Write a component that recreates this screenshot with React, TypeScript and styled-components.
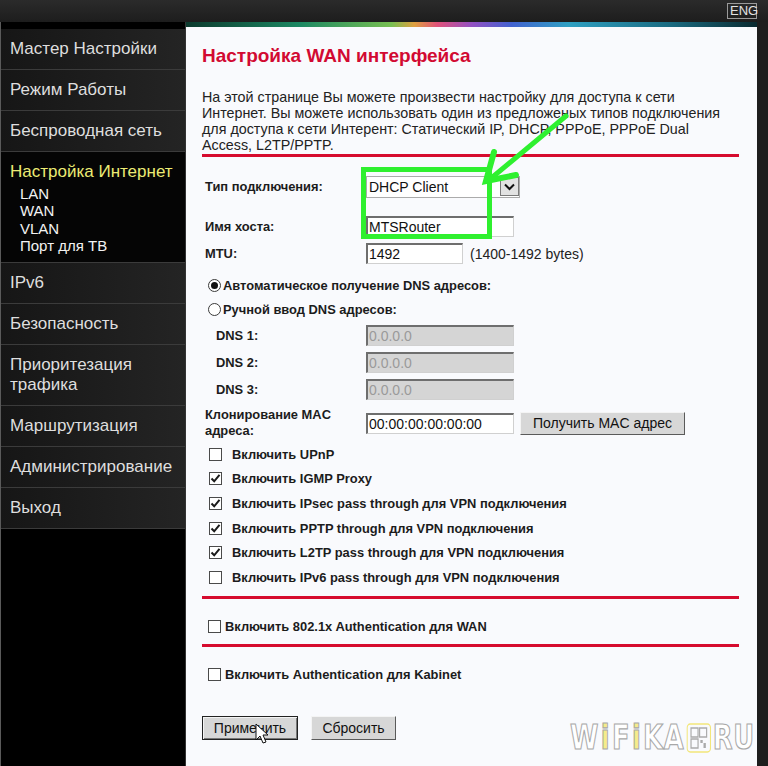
import React from 'react';
import styled, { createGlobalStyle, css } from 'styled-components';

const GlobalStyle = createGlobalStyle`
  html, body {
    margin: 0;
    padding: 0;
    background: #1c1c1c;
  }
  * {
    box-sizing: border-box;
  }
`;

const FONT = `"Liberation Sans", Arial, sans-serif`;

const Page = styled.div`
  position: relative;
  width: 768px;
  height: 766px;
  overflow: hidden;
  background: #1c1c1c;
  font-family: ${FONT};
  display: flex;
  flex-direction: column;
`;

const TopBar = styled.div`
  height: 22px;
  flex-shrink: 0;
  background: linear-gradient(#2b2b2b, #1d1d1d);
  display: flex;
  justify-content: flex-end;
  align-items: center;
  padding-right: 11px;
`;

const Lang = styled.span`
  border: 1px solid #9a9a9a;
  color: #e2e2e2;
  font-size: 13px;
  line-height: 14px;
  padding: 0 2px;
  width: 30px;
  text-align: center;
`;

const Main = styled.div`
  flex: 1;
  display: flex;
  min-height: 0;
`;

const Sidebar = styled.nav`
  width: 186px;
  flex-shrink: 0;
  background: #000;
  border-left: 1px solid #5a5a5a;
  border-right: 1px solid #333;
  padding-top: 7px;
  display: flex;
  flex-direction: column;
`;

const NavItem = styled.div`
  padding: 10px 9px;
  font-size: 17px;
  line-height: 20px;
  color: #dedede;
  background: linear-gradient(to right, #161616, #242424);
  border-bottom: 1px solid #3b3b3b;
`;

const ActiveGroup = styled.div`
  padding: 10px 9px 8px;
  background: #050505;
  border-bottom: 1px solid #3b3b3b;
`;

const ActiveTitle = styled.div`
  font-size: 17px;
  line-height: 20px;
  color: #ecec74;
`;

const SubList = styled.div`
  margin-top: 3px;
  padding-left: 10px;
`;

const SubItem = styled.div`
  font-size: 15px;
  line-height: 17.3px;
  color: #f2f2f2;
`;

const Panel = styled.section`
  position: relative;
  width: 571px;
  flex-shrink: 0;
  background: #f9fafd;
  display: flex;
  flex-direction: column;
`;

const Strip = styled.div`
  height: 5px;
  background: linear-gradient(
    to right,
    #0c3a2e 0%,
    #1c8863 20%,
    #78bf52 36%,
    #e0a040 40%,
    #e0527a 44%,
    #9350c2 50%,
    #4262d0 57%,
    #2fa0c2 67%,
    #1a6a80 85%,
    #0a2a30 100%
  );
`;

const PanelBody = styled.div`
  padding: 0 18px 0 16px;
  display: flex;
  flex-direction: column;
`;

const Title = styled.h1`
  margin: 18px 0 0;
  font-size: 19px;
  line-height: 22px;
  font-weight: bold;
  color: #d20a32;
`;

const Intro = styled.p`
  margin: 22px 0 0;
  font-size: 14.3px;
  line-height: 16px;
  color: #222;
`;

const Divider = styled.div<{ $top: number }>`
  height: 3px;
  margin-top: ${p => p.$top}px;
  background: #d60b2e;
`;

const Row = styled.div<{ $h: number; $top?: number }>`
  display: grid;
  grid-template-columns: 164px 1fr;
  align-items: center;
  height: ${p => p.$h}px;
  margin-top: ${p => p.$top ?? 0}px;
`;

const Label = styled.div<{ $indent?: number }>`
  padding-left: ${p => p.$indent ?? 3}px;
  font-size: 12.9px;
  line-height: 16px;
  font-weight: bold;
  color: #1c1c1c;
`;

const Field = styled.div`
  display: flex;
  align-items: center;
  font-size: 14px;
  color: #222;
`;

const SelectBox = styled.div`
  display: flex;
  align-items: center;
  width: 154px;
  height: 22px;
  border: 1px solid #ababab;
  background: #fff;
  padding-left: 2px;
  font-size: 14px;
  color: #111;
`;

const SelectArrow = styled.span`
  margin-left: auto;
  width: 19px;
  height: 19px;
  border: 1px solid #7a7a7a;
  background: #e2e2e2;
  display: flex;
  align-items: center;
  justify-content: center;
`;

const TextInput = styled.div<{ $w: number; $disabled?: boolean }>`
  width: ${p => p.$w}px;
  height: 21px;
  border-top: 2px solid #6e6e6e;
  border-left: 2px solid #6e6e6e;
  border-right: 1px solid #d0d0d0;
  border-bottom: 1px solid #d0d0d0;
  padding-left: 1px;
  font-size: 14px;
  line-height: 18px;
  color: #111;
  background: #fff;
  ${p =>
    p.$disabled &&
    css`
      background: #d5d5d5;
      color: #9a9a9a;
    `}
`;

const Hint = styled.span`
  margin-left: 7px;
  font-size: 14px;
  color: #222;
`;

const Button = styled.button<{ $w: number; $h?: number; $focused?: boolean }>`
  width: ${p => p.$w}px;
  height: ${p => p.$h ?? 24}px;
  padding: 0;
  font-family: ${FONT};
  font-size: 14px;
  color: #111;
  background: #d7d7d7;
  border: 1px solid;
  border-color: #f4f4f4 #5a5a5a #5a5a5a #f4f4f4;
  ${p =>
    p.$focused &&
    css`
      border: 1px solid #222;
      box-shadow: inset 1px 1px 0 #f4f4f4, inset -1px -1px 0 #777;
    `}
`;

const MacButton = styled(Button)`
  margin-left: 6px;
`;

const OptionRow = styled.div<{ $h: number; $top?: number; $pad: number; $gap: number }>`
  display: flex;
  align-items: center;
  height: ${p => p.$h}px;
  margin-top: ${p => p.$top ?? 0}px;
  padding-left: ${p => p.$pad}px;
  gap: ${p => p.$gap}px;
  font-size: 12.9px;
  font-weight: bold;
  color: #1c1c1c;
`;

const Box = styled.span`
  width: 13px;
  height: 13px;
  flex-shrink: 0;
  border: 1px solid #4a4a4a;
  background: #fff;
  display: flex;
  align-items: center;
  justify-content: center;
`;

const Radio = styled.span<{ $on?: boolean }>`
  width: 13px;
  height: 13px;
  flex-shrink: 0;
  border: 1px solid #3a3a3a;
  border-radius: 50%;
  background: #fff;
  display: flex;
  align-items: center;
  justify-content: center;
  &::after {
    content: '';
    width: 7px;
    height: 7px;
    border-radius: 50%;
    background: ${p => (p.$on ? '#111' : 'transparent')};
  }
`;

const Actions = styled.div`
  display: flex;
  gap: 13px;
  margin-top: 29px;
`;

const RightEdge = styled.div`
  flex: 1;
  background: #1e1e1e;
`;

const Watermark = styled.div`
  position: absolute;
  right: 2px;
  bottom: 13px;
  display: flex;
  align-items: center;
  gap: 2px;
  font-family: "DejaVu Sans", sans-serif;
  font-weight: bold;
  font-size: 33px;
  line-height: 28px;
  letter-spacing: 1px;
  color: #fff;
  -webkit-text-stroke: 1.2px #a8a8a8;
  transform: scaleX(0.78);
  transform-origin: right center;
`;

const Accent = styled.span`
  color: #f6ec8a;
`;

const Overlay = styled.svg`
  position: absolute;
  left: 0;
  top: 0;
  pointer-events: none;
`;

const Check = ({ on }: { on?: boolean }) => (
  <Box>
    {on && (
      <svg width="11" height="11" viewBox="0 0 11 11">
        <path d="M1.5 5.5 L4.2 8.3 L9.5 1.8" fill="none" stroke="#1a1a1a" strokeWidth="2" />
      </svg>
    )}
  </Box>
);

const options: [string, boolean][] = [
  ['Включить UPnP', false],
  ['Включить IGMP Proxy', true],
  ['Включить IPsec pass through для VPN подключения', true],
  ['Включить PPTP through для VPN подключения', true],
  ['Включить L2TP pass through для VPN подключения', true],
  ['Включить IPv6 pass through для VPN подключения', false],
];

const topNav = ['Мастер Настройки', 'Режим Работы', 'Беспроводная сеть'];
const bottomNav = ['IPv6', 'Безопасность', 'Приоритезация трафика', 'Маршрутизация', 'Администрирование', 'Выход'];

const App = () => {
  return (
    <Page>
      <GlobalStyle />
      <TopBar>
        <Lang>ENG</Lang>
      </TopBar>
      <Main>
        <Sidebar>
          {topNav.map(n => (
            <NavItem key={n}>{n}</NavItem>
          ))}
          <ActiveGroup>
            <ActiveTitle>Настройка Интернет</ActiveTitle>
            <SubList>
              <SubItem>LAN</SubItem>
              <SubItem>WAN</SubItem>
              <SubItem>VLAN</SubItem>
              <SubItem>Порт для ТВ</SubItem>
            </SubList>
          </ActiveGroup>
          {bottomNav.map(n => (
            <NavItem key={n}>{n}</NavItem>
          ))}
        </Sidebar>

        <Panel>
          <Strip />
          <PanelBody>
            <Title>Настройка WAN интерфейса</Title>
            <Intro>
              На этой странице Вы можете произвести настройку для доступа к сети
              <br />
              Интернет. Вы можете использовать один из предложеных типов подключения
              <br />
              для доступа к сети Интерент: Статический IP, DHCP, PPPoE, PPPoE Dual
              <br />
              Access, L2TP/PPTP.
            </Intro>
            <Divider $top={1} />

            <Row $h={27} $top={16}>
              <Label>Тип подключения:</Label>
              <Field>
                <SelectBox>
                  DHCP Client
                  <SelectArrow>
                    <svg width="11" height="8" viewBox="0 0 11 8">
                      <path d="M1 1.5 L5.5 6 L10 1.5" fill="none" stroke="#111" strokeWidth="2" />
                    </svg>
                  </SelectArrow>
                </SelectBox>
              </Field>
            </Row>
            <Row $h={27} $top={13}>
              <Label>Имя хоста:</Label>
              <Field>
                <TextInput $w={148}>MTSRouter</TextInput>
              </Field>
            </Row>
            <Row $h={27}>
              <Label>MTU:</Label>
              <Field>
                <TextInput $w={97}>1492</TextInput>
                <Hint>(1400-1492 bytes)</Hint>
              </Field>
            </Row>

            <OptionRow $h={24} $top={6} $pad={6} $gap={2}>
              <Radio $on />
              Автоматическое получение DNS адресов:
            </OptionRow>
            <OptionRow $h={24} $pad={6} $gap={2}>
              <Radio />
              Ручной ввод DNS адресов:
            </OptionRow>

            {['DNS 1:', 'DNS 2:', 'DNS 3:'].map((d, i) => (
              <Row key={d} $h={27} $top={i === 0 ? 1 : 0}>
                <Label $indent={14}>{d}</Label>
                <Field>
                  <TextInput $w={148} $disabled>
                    0.0.0.0
                  </TextInput>
                </Field>
              </Row>
            ))}

            <Row $h={38} $top={1}>
              <Label>
                Клонирование MAC
                <br />
                адреса:
              </Label>
              <Field>
                <TextInput $w={148}>00:00:00:00:00:00</TextInput>
                <MacButton $w={165} $h={23}>
                  Получить MAC адрес
                </MacButton>
              </Field>
            </Row>

            {options.map(([text, on]) => (
              <OptionRow key={text} $h={24.6} $pad={7} $gap={10}>
                <Check on={on} />
                {text}
              </OptionRow>
            ))}

            <Divider $top={6} />
            <OptionRow $h={24} $top={16} $pad={6} $gap={4}>
              <Check />
              Включить 802.1x Authentication для WAN
            </OptionRow>
            <Divider $top={5} />
            <OptionRow $h={24} $top={16} $pad={6} $gap={4}>
              <Check />
              Включить Authentication для Kabinet
            </OptionRow>

            <Actions>
              <Button $w={96} $focused>
                Применить
              </Button>
              <Button $w={85}>Сбросить</Button>
            </Actions>
          </PanelBody>

          <Watermark>
            W<Accent>i</Accent>F<Accent>i</Accent>KA
            <svg width="32" height="30" viewBox="0 0 32 30">
              <rect x="1" y="1" width="30" height="28" rx="4" fill="none" stroke="#f2e67a" strokeWidth="1.5" />
              <rect x="6" y="5" width="9" height="9" fill="none" stroke="#aaa" strokeWidth="1.5" />
              <rect x="17" y="5" width="9" height="9" fill="none" stroke="#aaa" strokeWidth="1.5" />
              <rect x="6" y="16" width="9" height="9" fill="none" stroke="#aaa" strokeWidth="1.5" />
              <rect x="18" y="17" width="3" height="3" fill="#aaa" />
              <rect x="22" y="20" width="3" height="5" fill="#aaa" />
            </svg>
            RU
          </Watermark>
        </Panel>
        <RightEdge />
      </Main>

      <Overlay width="768" height="766" viewBox="0 0 768 766">
        <rect x="363.5" y="169.5" width="126" height="67" fill="none" stroke="#2ff02f" strokeWidth="5" />
        <line x1="566" y1="116" x2="489" y2="180" stroke="#2ff02f" strokeWidth="5" strokeLinecap="round" />
        <polyline
          points="494,152 486,181 516,175"
          fill="none"
          stroke="#2ff02f"
          strokeWidth="6"
          strokeLinejoin="miter"
          strokeLinecap="round"
        />
        <path
          d="M256 724 L256 740 L260 736 L263 743 L266 742 L263 735 L268 735 Z"
          fill="#fff"
          stroke="#111"
          strokeWidth="1"
        />
      </Overlay>
    </Page>
  );
};

export default App;
